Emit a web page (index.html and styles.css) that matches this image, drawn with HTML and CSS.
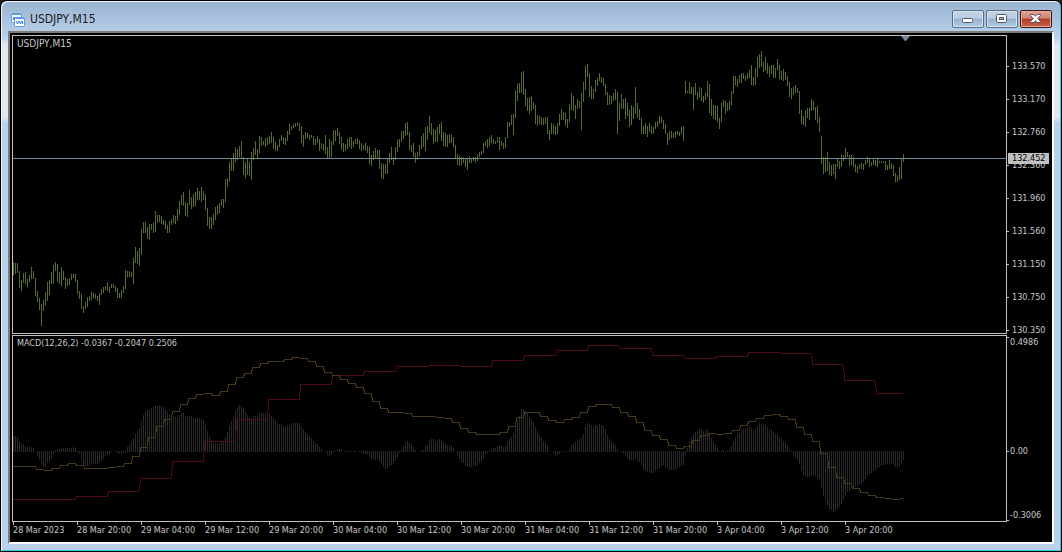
FILE: index.html
```html
<!DOCTYPE html>
<html lang="en">
<head>
<meta charset="utf-8">
<title>USDJPY,M15</title>
<link rel="stylesheet" href="styles.css">
</head>
<body>
<main class="window">
  <header class="titlebar">
    <svg class="app-icon" width="14" height="14" viewBox="0 0 14 14" aria-hidden="true">
      <rect x="0.5" y="0.5" width="10" height="9" rx="1" fill="#fff" stroke="#5b9be6"/>
      <path d="M1 1.500h9" stroke="#5b9be6"/>
      <path d="M2 7l1-3 1 2 1-2" stroke="#2f78d0" fill="none"/>
      <rect x="3.500" y="4.500" width="10" height="9" rx="1" fill="#fff" stroke="#5b9be6"/>
      <path d="M4 5.500h9" stroke="#5b9be6"/>
      <path d="M5 8l1.500 3L8 8l1.500 3L11 8l1 3" stroke="#2f78d0" fill="none"/>
    </svg>
    <h1 class="title">USDJPY,M15</h1>
    <div class="controls">
      <button class="control" type="button" aria-label="Minimize">
        <svg width="12" height="10" viewBox="0 0 12 10"><rect x="0.5" y="4.500" width="10" height="4" rx="1" fill="#fff" stroke="#535666"/></svg>
      </button>
      <button class="control" type="button" aria-label="Maximize">
        <svg width="12" height="10" viewBox="0 0 12 10"><rect x="0.5" y="0.5" width="10" height="8" rx="1" fill="#fff" stroke="#535666"/><rect x="3.500" y="3.500" width="4" height="2" fill="#9cb4cf" stroke="#535666"/></svg>
      </button>
      <button class="control control-close" type="button" aria-label="Close">
        <svg width="12" height="10" viewBox="0 0 12 10"><path d="M.5.5h3.500L5.500 2.300 7 .5h3.500v1L7.800 4.500l2.700 3v1H7L5.500 6.700 4 8.500H.5v-1l2.700-3L.5 1.500z" fill="#fff" stroke="#535666"/></svg>
      </button>
    </div>
  </header>
  <section class="client">
    <div class="plot">
      <svg class="canvas" viewBox="0 0 993 297" preserveAspectRatio="none" aria-label="Price chart">
        <path id="bars" class="bars"/>
        <path class="price-line" d="M0 122.500H993"/>
        <path class="shift-mark" d="M888 0h9l-4 5h-1z"/>
      </svg>
      <span class="caption">USDJPY,M15</span>
    </div>
    <div class="price-axis">
      <span class="mark">133.570</span>
      <span class="mark">133.170</span>
      <span class="mark">132.760</span>
      <span class="mark"><b class="current">132.452</b>132.360</span>
      <span class="mark">131.960</span>
      <span class="mark">131.560</span>
      <span class="mark">131.150</span>
      <span class="mark">130.750</span>
      <span class="mark">130.350</span>
    </div>
    <div class="plot">
      <svg class="canvas" viewBox="0 0 993 185" preserveAspectRatio="none" aria-label="MACD indicator">
        <path id="histogram" class="histogram"/>
        <path id="slow" class="slow"/>
        <path id="fast" class="fast"/>
      </svg>
      <span class="caption caption-long">MACD(12,26,2) -0.0367 -0.2047 0.2506</span>
    </div>
    <div class="macd-axis">
      <span class="mark mark-top">0.4986</span>
      <span class="mark">0.00</span>
      <span class="mark mark-bottom">-0.3006</span>
    </div>
    <div class="time-axis">
      <span>28 Mar 2023</span><span>28 Mar 20:00</span><span>29 Mar 04:00</span><span>29 Mar 12:00</span><span>29 Mar 20:00</span><span>30 Mar 04:00</span><span>30 Mar 12:00</span><span>30 Mar 20:00</span><span>31 Mar 04:00</span><span>31 Mar 12:00</span><span>31 Mar 20:00</span><span>3 Apr 04:00</span><span>3 Apr 12:00</span><span>3 Apr 20:00</span>
    </div>
  </section>
</main>
<script src="chart.js"></script>
</body>
</html>
```
FILE: styles.css
```css
* { box-sizing: border-box; }

body {
  margin: 0;
  background: #1c1c20;
  font-family: "DejaVu Sans Condensed", "DejaVu Sans", sans-serif;
}

.window {
  display: flex;
  flex-direction: column;
  height: 100vh;
  min-height: 300px;
  padding: 0 7px 7px 6px;
  border: 1px solid #000;
  border-radius: 7px 7px 0 0;
  background: linear-gradient(#99b4d1 0, #b9d1ea 36px, #dfe9f5 44px, #dfe9f5 116px, #b9d1ea 122px);
  box-shadow: inset 1px 1px #f4f8fc, inset -1px -1px #35c8e6;
}

.titlebar {
  display: flex;
  align-items: center;
  height: 30px;
  padding: 6px 2px 0 4px;
}

.app-icon { margin-top: 1px; }

.title {
  flex: 1;
  margin: 0 0 0 5px;
  font-size: 12px;
  font-weight: 400;
  line-height: 16px;
  color: #1c1c1c;
}

.controls { display: flex; gap: 2px; }

.control {
  display: flex;
  align-items: center;
  justify-content: center;
  width: 32px;
  height: 18px;
  padding: 0;
  border: 1px solid #5d6f87;
  border-radius: 2px;
  background: linear-gradient(#c3d4e7 0, #b9cce2 45%, #98b1cd 50%, #b3cbe4);
  box-shadow: inset 0 0 0 1px #d4e2f0;
}

.control-close {
  border-color: #43141c;
  background: linear-gradient(#e0a398 0, #cf8273 45%, #b53a23 50%, #c96449);
  box-shadow: inset 0 0 0 1px #e2a99c;
}

.client {
  flex: 1;
  display: grid;
  grid-template-columns: minmax(0, 1fr) 45px;
  grid-template-rows: minmax(0, 299fr) minmax(0, 187fr) 19px;
  row-gap: 1px;
  margin-left: 1px;
  padding: 2px 0 0 2px;
  border: 2px solid;
  border-color: #7c7c7c #fff #fff #7c7c7c;
  background: #000;
  color: #c8c8c8;
  font-size: 9px;
  line-height: 11px;
}

.plot {
  position: relative;
  border: 1px solid #c0c0c0;
}

.canvas {
  display: block;
  width: 100%;
  height: 100%;
}

.caption {
  position: absolute;
  top: 2px;
  left: 4px;
  font-size: 10px;
}

.caption-long { font-size: 9px; }

.bars { stroke: #556b2f; shape-rendering: crispEdges; }
.histogram { stroke: #2a2a2a; shape-rendering: crispEdges; }
.price-line { stroke: #778899; shape-rendering: crispEdges; }
.shift-mark { fill: #778899; }
.slow, .fast { fill: none; shape-rendering: crispEdges; }
.slow { stroke: #4d0a19; }
.fast { stroke: #463a1a; }

.price-axis {
  display: flex;
  flex-direction: column;
  justify-content: space-between;
  padding: 31px 0 3px;
}

.macd-axis {
  display: grid;
  grid-template-rows: 114fr 69fr 1px;
  padding: 2px 0 1px;
}

.mark {
  position: relative;
  display: flex;
  align-items: center;
  height: 1px;
  white-space: nowrap;
}

.mark::before {
  content: "";
  width: 2px;
  height: 1px;
  margin-right: 3px;
  background: #c0c0c0;
}

.macd-axis .mark::before { margin-right: 1px; }
.mark-top { align-items: flex-start; }
.mark-bottom { align-items: flex-end; }

.current {
  position: absolute;
  top: -12px;
  left: 1px;
  width: 41px;
  padding-left: 4px;
  background: #c0c0c0;
  color: #000;
  font-weight: 400;
}

.time-axis {
  grid-column: 1 / -1;
  display: grid;
  grid-template-columns: repeat(14, 64fr) 97fr;
  margin: -1px 46px 0 1px;
  white-space: nowrap;
}

.time-axis span { min-width: 0; }

.time-axis span::before {
  content: "";
  display: block;
  width: 1px;
  height: 3px;
  background: #c0c0c0;
}
```
FILE: chart.js
```js
// Each row: first x, then one "high,low" pair per bar, two pixels apart.
const priceRows = [
  [13, "262,275 263,274 263,273 271,288 280,291 273,283 272,284 279,287 275,282 267,279 271,279 278,296 291,302 298,310 304,326 300,311 292,306 282,301 280,295 272,284 265,284 262,271 264,282 272,284 267,286 271,280 277,289 279,286 278,285 274,280 274,278 274,282 280,294 291,299 294,309 306,313 302,309 297,307 296,301 292,300 293,298 294,299 296,301 293,305 289,295 287,293 286,290 282,291 287,293 284,288 284,288 286,292 288,298 293,298 290,298 286,293 270,289 271,277 271,277 272,277 258,284 247,263 251,264 248,266"],
  [141, "229,255 222,233 222,233 227,239 224,240 224,230 223,233 211,232 215,223 215,222 216,224 220,225 221,229 225,233 221,233 219,225 215,223 216,224 209,221 201,215 195,205 192,206 202,216 203,217 190,205 197,209 194,207 192,206 188,200 191,200 187,202 191,200 194,210 208,226 217,229 217,229 214,225 207,220 205,215 203,213 199,206 199,208 179,202 178,187"],
  [229, "162,182 159,171 153,171 147,162 149,160 146,157 141,158 157,175 162,178 159,175 162,176 152,180 148,160 141,155 149,159 136,153 137,146 141,145 138,147 137,145 136,144 132,143 137,149 142,151 145,151 139,147 135,141 137,144 138,145 131,141 124,135 126,130 124,128 123,127 122,126 123,131 126,143 135,147 132,139 133,138 135,140 135,138 136,145 139,145 136,143 139,151 143,149 144,151 135,154 147,158 139,158 141,157 130,145 130,141 128,136 132,144 137,150 143,152 144,151 139,149 137,147 137,149 141,147 139,144 138,144 140,149 143,151 145,150 143,151 146,153 147,164 155,166 151,160 148,159 150,159 150,169 163,178 164,179 164,174 159,174 153,163 147,160 157,165 147,160 140,152 139,147 131,142 131,139 123,136 122,135 132,150 145,152 143,157 153,163 152,160 145,156 136,149 133,147 127,151 126,140 116,133 123,135 129,144 130,142 127,142 124,134 122,141 132,146 133,147 135,147 134,143 135,143 137,147 145,159 154,165 156,166 157,165 157,163 159,167 159,170 156,163 158,163 157,161 157,163 155,161"],
  [479, "152,157 151,155 143,153 141,146 139,148 137,146 135,143 139,144 141,144 137,143 137,150 141,146 143,149 137,148 122,138 122,127 115,125 114,135 90,118 84,101 83,93 72,93 71,95 89,106 98,111 97,114 96,111 102,109 105,124 115,126 116,124 117,125 118,125 117,124 117,134 130,140 123,134 124,134 126,135 123,134 114,126 109,120 112,120 113,126 119,128 104,122 93,110 96,111 105,119 99,109 101,108 93,130 82,102 66,90 64,77 73,97 86,99 89,99 80,92 78,86 73,81 77,83 78,86 84,95 92,105 95,105 96,104 93,101 89,100 92,134 103,121 94,109 99,109 98,119 103,116 110,127 105,125 107,119 87,114 103,118 109,120 118,134 126,134 123,134 126,137 123,132 126,134 127,134 122,129 121,127 116,124 117,123 120,129 124,134 133,145 131,140 131,138 133,138 131,137 131,135 132,136 127,134 126,141"],
  [685, "81,94 91,93 82,94 87,94 87,110 83,95 92,100 87,98 88,101 96,103 93,100 81,97 84,113 99,116 105,119 105,120 106,122 118,129 103,122 100,107 101,114 103,111 101,110 91,105 76,94 76,85 79,87 75,83 73,83 73,79 76,81 73,79 70,78 65,85 77,86 68,85 57,77 54,68 51,67 62,72 57,71 63,74 66,77 65,74 65,78 68,78 59,70 65,79 71,80 69,81 72,80 76,86 82,97 88,99 87,95 85,93 88,93 91,114 110,124 116,125 110,127 108,118 108,120 99,111 101,110 107,120 106,123 117,132 136,164 157,174 157,172 152,171 162,175 165,176 164,174 164,179 159,167 161,169 154,167 155,161 148,158 152,157 155,166 155,165 157,167 164,172 166,173 164,169 163,169 164,170 160,165 157,163 159,167 162,166 159,165 160,166 159,167 161,163 161,163 161,163 161,170 165,170 160,169 163,169 165,176 173,182 175,182 167,180 158,179 154,162"]
];

// Each row: first x, then the end of each histogram bar; 0 leaves a gap.
const macdRows = [
  [13, "436 436 437 441 444 444 446 447 447 447 448 0 456 460 464 467 467 463 461 458 454 450 449 449 448 448 448 448 448 448 447 448 452 454 460 464 466 466 466 464 464 464 464 463 461 459 456 455 454 452 0 452 453 454 454 453 450 447 444 441 438 434 431 428 421 415 412 410 409 408 407 406 406 405 406 407 410 412 414 415 416 417 417 415 413 413 416 416 416 416 418 418 418 418 419 420 424 431 436 440 443 444 444 443 441 441 437 432 426 421 417 411 407 405 406 408 412 415 418 418 416 416 416 414 413 413 413 415 414 416 419 421 423 424 424 426 427 426 425 424 423 423 423 423"],
  [301, "427 429 432 434 436 438 441 443 444 447 449 0 452 455 456 455 452 451 449 449 450 0 453 452 452 452 452 452 0 452 453 454 454 455 457 459 459 460 459 462 464 467 469 468 466 465 464 461 457 453 450 446 442 441 443 444 447 450 0 0 450 450 446 444 440 439 439 441 440 439 440 442 444 445 445 446 448 0 455 459 462 463 466 466 467 467 467 466 465 463 461 458 454 453 452 450 448 448 446 446 446 447 446 442 439 437 434 429 421 416 409 409 411 413 417 419 422 427 431 435 437 441 443 446 451 0 453 456 455 454 452 0 452 0 449 445 444 442 440 439 438 434 427 423 424"],
  [591, "425 427 425 425 424 425 426 429 435 439 441 443 445 449 0 452 453 455 458 460 460 460 459 461 462 465 470 471 472 472 473 473 471 469 468 466 465 467 469 470 470 470 469 468 467 466 465 455 448 441 437 434 432 431 429 429 431 431 429 434 438 441 444 448 451 450 450 451 450 449 446 441 437 434 432 430 429 429 428 426 428 430 429 426 423 424 424 425 427 429 430 432 434 434 437 438 441 443 446 450 451 455 457 459 464 470 475 476 477 477 476 475 476 478 480 488 496 500 505 509 510 512 511 509 507 504 500 495 492 491 488 488 487 486 485 484 482 479 476 474 473 471 470 468 467"],
  [881, "466 465 465 464 465 464 465 467 468 466 463 460"]
];

const fastSteps = "466 466 466 469 470 468 465 463 465 468 468 468 467 466 463 456 447 437 426 419 411 404 398 394 393 395 391 384 377 373 367 363 361 361 359 357 358 361 366 372 375 379 383 387 393 401 408 412 412 413 416 416 416 417 418 422 428 432 434 434 434 432 426 417 412 412 416 420 422 419 417 412 406 404 404 407 412 416 422 430 435 439 445 448 446 440 435 433 434 433 430 425 421 418 415 414 416 419 427 434 441 453 467 477 483 488 492 495 497 498 499 498";
const slowSteps = "499 499 496 491 478 461 441 419 399 384 375 371 366 365 366 360 355 350 345 348 355 358 356 352 353 364 380 393";

const left = 13, priceTop = 36, macdTop = 336, zero = 451, end = 890;

function draw(id, d) {
  document.getElementById(id).setAttribute("d", d);
}

function columns(rows, toSpan) {
  return rows.map(([start, text]) => text.split(" ").map((item, i) => {
    const span = toSpan(item);
    return span ? `M${start - left + i * 2 + 0.5} ${span[0]}V${span[1]}` : "";
  }).join("")).join("");
}

function steps(text, width) {
  return "M" + text.split(" ").map((y, i) => {
    const x = i * width, level = y - macdTop + 0.5;
    return `${x} ${level} ${Math.min(x + width - 2, end)} ${level}`;
  }).join(" L");
}

draw("bars", columns(priceRows, item => item.split(",").map(v => v - priceTop)));
draw("histogram", columns(macdRows, item => {
  const v = Number(item);
  if (!v) return null;
  return v > zero ? [zero - macdTop, v - macdTop] : [v - macdTop, zero + 1 - macdTop];
}));
draw("fast", steps(fastSteps, 8));
draw("slow", steps(slowSteps, 32));
```
